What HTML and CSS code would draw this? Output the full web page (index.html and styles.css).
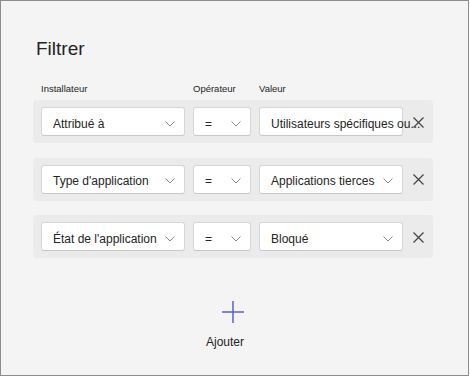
FILE: index.html
```html
<!DOCTYPE html>
<html lang="fr">
<head>
  <meta charset="UTF-8">
  <meta name="viewport" content="width=device-width, initial-scale=1.0">
  <title>Filtrer</title>
  <link rel="stylesheet" href="styles.css">
</head>
<body>
  <div class="panel">
    <h1 class="title">Filtrer</h1>

    <div class="labels">
      <span>Installateur</span>
      <span>Opérateur</span>
      <span>Valeur</span>
    </div>

    <div class="rows">
      <div class="row">
        <div class="dropdown">
          <span class="dropdown-text">Attribué à</span>
          <svg class="chevron" width="10" height="6" viewBox="0 0 10 6"><path d="M0.5 0.5 L5 5 L9.5 0.5" /></svg>
        </div>
        <div class="dropdown">
          <span class="dropdown-text">=</span>
          <svg class="chevron" width="10" height="6" viewBox="0 0 10 6"><path d="M0.5 0.5 L5 5 L9.5 0.5" /></svg>
        </div>
        <div class="dropdown dropdown-long">
          <span class="dropdown-text">Utilisateurs spécifiques ou...</span>
        </div>
        <svg class="remove" width="11" height="11" viewBox="0 0 11 11"><path d="M0.5 0.5 L10.5 10.5 M10.5 0.5 L0.5 10.5" /></svg>
      </div>

      <div class="row">
        <div class="dropdown">
          <span class="dropdown-text">Type d'application</span>
          <svg class="chevron" width="10" height="6" viewBox="0 0 10 6"><path d="M0.5 0.5 L5 5 L9.5 0.5" /></svg>
        </div>
        <div class="dropdown">
          <span class="dropdown-text">=</span>
          <svg class="chevron" width="10" height="6" viewBox="0 0 10 6"><path d="M0.5 0.5 L5 5 L9.5 0.5" /></svg>
        </div>
        <div class="dropdown">
          <span class="dropdown-text">Applications tierces</span>
          <svg class="chevron" width="10" height="6" viewBox="0 0 10 6"><path d="M0.5 0.5 L5 5 L9.5 0.5" /></svg>
        </div>
        <svg class="remove" width="11" height="11" viewBox="0 0 11 11"><path d="M0.5 0.5 L10.5 10.5 M10.5 0.5 L0.5 10.5" /></svg>
      </div>

      <div class="row">
        <div class="dropdown">
          <span class="dropdown-text">État de l'application</span>
          <svg class="chevron" width="10" height="6" viewBox="0 0 10 6"><path d="M0.5 0.5 L5 5 L9.5 0.5" /></svg>
        </div>
        <div class="dropdown">
          <span class="dropdown-text">=</span>
          <svg class="chevron" width="10" height="6" viewBox="0 0 10 6"><path d="M0.5 0.5 L5 5 L9.5 0.5" /></svg>
        </div>
        <div class="dropdown">
          <span class="dropdown-text">Bloqué</span>
          <svg class="chevron" width="10" height="6" viewBox="0 0 10 6"><path d="M0.5 0.5 L5 5 L9.5 0.5" /></svg>
        </div>
        <svg class="remove" width="11" height="11" viewBox="0 0 11 11"><path d="M0.5 0.5 L10.5 10.5 M10.5 0.5 L0.5 10.5" /></svg>
      </div>
    </div>

    <div class="add">
      <svg class="add-icon" width="22" height="22" viewBox="0 0 22 22"><path d="M11 0 L11 22 M0 11 L22 11" /></svg>
      <span class="add-text">Ajouter</span>
    </div>
  </div>
</body>
</html>
```

FILE: styles.css
```css
body {
  margin: 0;
  background: #ffffff;
  font-family: "Liberation Sans", Arial, sans-serif;
  color: #242424;
}

.panel {
  box-sizing: border-box;
  width: 469px;
  height: 376px;
  border: 1px solid #8c8c8c;
  background: #f4f4f4;
  padding: 37px 0 0 32px;
  display: flex;
  flex-direction: column;
}

.title {
  margin: 0 0 0 3px;
  font-size: 19px;
  line-height: 22px;
  font-weight: normal;
}

/* column labels share the row grid */
.labels,
.row {
  display: grid;
  grid-template-columns: 144px 58px 144px 1fr;
  column-gap: 8px;
  width: 400px;
  box-sizing: border-box;
}

.labels {
  margin-top: 23px;
  margin-bottom: 5px;
  padding-left: 8px;
  font-size: 9.5px;
  line-height: 12px;
}

.rows {
  display: flex;
  flex-direction: column;
  gap: 14.5px;
}

.row {
  height: 43px;
  padding: 7px 9px 7px 8px;
  background: #ebebeb;
  border-radius: 4px;
  align-items: center;
}

.dropdown {
  box-sizing: border-box;
  height: 29px;
  display: flex;
  align-items: center;
  justify-content: space-between;
  padding: 4px 9px 0 11px;
  background: #ffffff;
  border: 1px solid #d6d6d6;
  border-bottom-color: #c7c7c7;
  border-radius: 3px;
  font-size: 12px;
  line-height: 14px;
  white-space: nowrap;
}

.dropdown-long {
  overflow: visible;
}

.chevron {
  flex: none;
  fill: none;
  stroke: #8a8a8a;
  stroke-width: 1;
}

.remove {
  justify-self: end;
  margin-top: 1px;
  fill: none;
  stroke: #424242;
  stroke-width: 1.2;
}

.add {
  width: 400px;
  margin-top: 43px;
  display: flex;
  flex-direction: column;
  align-items: center;
}

.add-icon {
  fill: none;
  stroke: #5b5fc7;
  stroke-width: 1.5;
}

.add-text {
  margin-top: 12px;
  margin-right: 16px;
  font-size: 12px;
  line-height: 14px;
}
```
